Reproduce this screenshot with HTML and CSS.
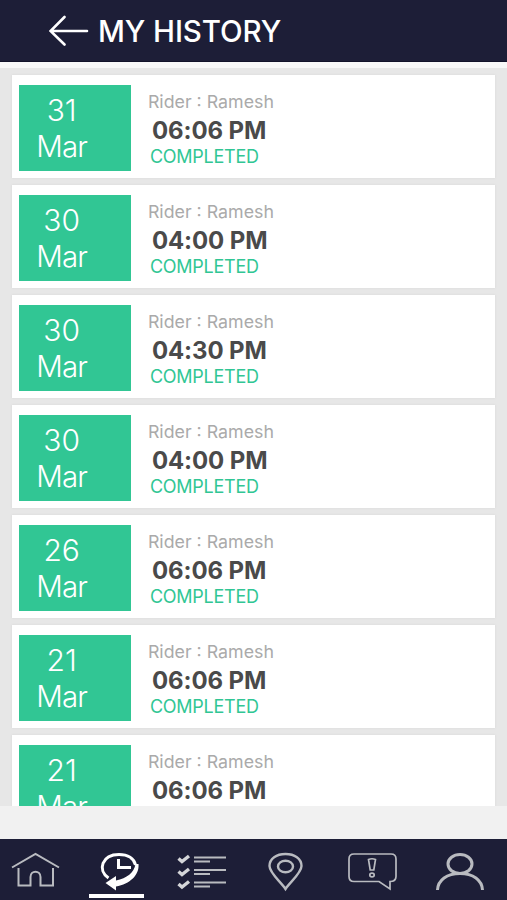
FILE: index.html
```
<!DOCTYPE html>
<html lang="en">
<head>
  <meta charset="UTF-8">
  <title>My History</title>
  <link rel="stylesheet" href="styles.css">
</head>
<body>
  <div class="app">
    <header class="header">
      <svg class="back" width="40" height="32" viewBox="0 0 40 32">
        <path d="M38 16H2M15.500 2L1.500 16L15.500 29.500"/>
      </svg>
      <h1>MY HISTORY</h1>
    </header>

    <main class="list">
      <div class="card">
        <div class="date"><span class="day">31</span><span class="month">Mar</span></div>
        <div class="info">
          <div class="rider">Rider : Ramesh</div>
          <div class="time">06:06 PM</div>
          <div class="status">COMPLETED</div>
        </div>
      </div>
      <div class="card">
        <div class="date"><span class="day">30</span><span class="month">Mar</span></div>
        <div class="info">
          <div class="rider">Rider : Ramesh</div>
          <div class="time">04:00 PM</div>
          <div class="status">COMPLETED</div>
        </div>
      </div>
      <div class="card">
        <div class="date"><span class="day">30</span><span class="month">Mar</span></div>
        <div class="info">
          <div class="rider">Rider : Ramesh</div>
          <div class="time">04:30 PM</div>
          <div class="status">COMPLETED</div>
        </div>
      </div>
      <div class="card">
        <div class="date"><span class="day">30</span><span class="month">Mar</span></div>
        <div class="info">
          <div class="rider">Rider : Ramesh</div>
          <div class="time">04:00 PM</div>
          <div class="status">COMPLETED</div>
        </div>
      </div>
      <div class="card">
        <div class="date"><span class="day">26</span><span class="month">Mar</span></div>
        <div class="info">
          <div class="rider">Rider : Ramesh</div>
          <div class="time">06:06 PM</div>
          <div class="status">COMPLETED</div>
        </div>
      </div>
      <div class="card">
        <div class="date"><span class="day">21</span><span class="month">Mar</span></div>
        <div class="info">
          <div class="rider">Rider : Ramesh</div>
          <div class="time">06:06 PM</div>
          <div class="status">COMPLETED</div>
        </div>
      </div>
      <div class="card">
        <div class="date"><span class="day">21</span><span class="month">Mar</span></div>
        <div class="info">
          <div class="rider">Rider : Ramesh</div>
          <div class="time">06:06 PM</div>
        </div>
      </div>
    </main>

    <nav class="tabs">
      <!-- home -->
      <a class="tab">
        <svg width="84" height="61" viewBox="0 0 84 61">
          <path d="M12 28.500L35.500 15L59 28.500M18.500 29V46.500H30.500V38C30.500 31 40.500 31 40.500 38V46.500H53V29"/>
        </svg>
      </a>
      <!-- history -->
      <a class="tab active">
        <svg width="84" height="61" viewBox="0 0 84 61">
          <path class="bold" d="M23.500 39C12 31 17 15.500 34 15.500C43 15.500 49 19.500 50.500 26"/>
          <path class="fill" d="M50.500 25H53.500C54.500 36 45 45 31 47.500V51.500L20.500 44L31 37V41.500C42 39 49 34 50.500 25Z"/>
          <path class="bold" d="M33.500 20V28.500H46"/>
        </svg>
        <span class="bar"></span>
      </a>
      <!-- checklist -->
      <a class="tab">
        <svg width="84" height="61" viewBox="0 0 84 61">
          <path class="check" d="M9.500 19.500L13 22.500L20 17M9.500 32.500L13 35.500L20 30M9.500 45L13 48L20 42.500"/>
          <path d="M25 18.500H57M25 22.500H41M25 31H57M25 35H41M25 43.500H57M25 47.500H41"/>
        </svg>
      </a>
      <!-- location -->
      <a class="tab">
        <svg width="84" height="61" viewBox="0 0 84 61">
          <path class="pin" d="M31.500 50C27 43 15.500 34 15.500 27C15.500 19.500 22.500 15 31.500 15S47.500 19.500 47.500 27C47.500 34 36 43 31.500 50Z"/>
          <ellipse class="pin" cx="31.500" cy="27.500" rx="7.500" ry="5.800"/>
        </svg>
      </a>
      <!-- alerts -->
      <a class="tab">
        <svg width="84" height="61" viewBox="0 0 84 61">
          <path class="thin" d="M16 15H53Q58 15 58 20V37.500Q58 42.500 52 42.500V50L41 42.500H16Q11 42.500 11 37.500V20Q11 15 16 15Z"/>
          <path class="thin" d="M30.500 20.500Q34 19 37.500 20.500L35.800 31H32.200Z"/>
          <ellipse class="thin" cx="34" cy="36" rx="2.200" ry="1.800"/>
        </svg>
      </a>
      <!-- profile -->
      <a class="tab">
        <svg width="84" height="61" viewBox="0 0 84 61">
          <ellipse class="bold" cx="37" cy="25" rx="12" ry="9.500"/>
          <path class="bold" d="M14.500 51C15 41 24 34.500 37 34.500S59 41 59.500 51"/>
        </svg>
      </a>
    </nav>
  </div>
</body>
</html>
```
FILE: styles.css
```
* {
  box-sizing: border-box;
}
body {
  margin: 0;
  font-family: Inter, "Liberation Sans", sans-serif;
  background: #f1f1f1;
}
.app {
  display: flex;
  flex-direction: column;
  height: 900px;
  overflow: hidden;
}
.header {
  display: flex;
  align-items: center;
  flex: none;
  height: 62px;
  padding-left: 49px;
  background: #1d1e37;
  border-bottom: 1px solid #12122a;
}
.header h1 {
  margin: 0 0 0 9px;
  color: #fff;
  font-size: 29.5px;
  font-weight: 500;
  letter-spacing: -0.1px;
  white-space: nowrap;
}
.back {
  fill: none;
  stroke: #fff;
  stroke-width: 2.6;
  stroke-linecap: round;
}
.list {
  height: 744px;
  padding: 7px 12px 0;
  overflow: hidden;
  background: #e7e7e7;
  border-top: 6px solid #f8f8f8;
}
.card {
  display: flex;
  height: 103px;
  margin-bottom: 7px;
  padding: 10px 7.4px;
  background: #fff;
  box-shadow: 0 0 2px #d5d5d5;
}
.date {
  display: flex;
  flex-direction: column;
  align-items: center;
  width: 111.5px;
  height: 85.5px;
  padding: 6.5px 27px 0 0;
  background: #31c694;
  color: #fff;
  font-size: 30px;
  font-weight: 300;
  line-height: 36px;
}
.month {
  font-size: 29.5px;
  letter-spacing: -0.8px;
}
.info {
  padding: 5.5px 0 0 17px;
  white-space: nowrap;
}
.rider {
  color: #aaa;
  font-size: 17.8px;
  line-height: 22px;
}
.time {
  margin: 3px 0 0 4px;
  color: #4a4a4a;
  font-size: 24px;
  font-weight: 700;
  line-height: 30px;
  letter-spacing: -0.1px;
}
.status {
  padding-left: 2px;
  color: #31c694;
  font-size: 18px;
  line-height: 22px;
  letter-spacing: -0.25px;
}
.tabs {
  display: grid;
  grid-template-columns: repeat(6, 84.5px);
  flex: none;
  height: 61px;
  margin-top: auto;
  background: #1d1e37;
}
.tab {
  position: relative;
}
.tab svg {
  display: block;
  fill: none;
  stroke: #b9bbc0;
  stroke-width: 2;
}
.tab .thin {
  stroke-width: 1.7;
}
.tab .pin {
  stroke-width: 2.4;
}
.tab .bold {
  stroke-width: 3;
}
.tab .check {
  stroke-width: 3.4;
  stroke: #d5d6d9;
}
.active svg {
  stroke: #fff;
}
.active .fill {
  fill: #fff;
  stroke: none;
}
.bar {
  position: absolute;
  left: 4px;
  bottom: 2px;
  width: 55px;
  height: 4px;
  background: #fff;
}
```
